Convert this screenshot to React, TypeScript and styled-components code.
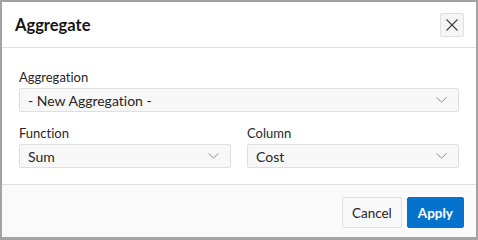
import React from "react";
import styled, { createGlobalStyle } from "styled-components";

const GlobalStyle = createGlobalStyle`
  html, body {
    margin: 0;
    padding: 0;
    background: #ffffff;
  }
  body {
    font-family: Lato, "Noto Sans", sans-serif;
    font-variant-ligatures: none;
    color: #262626;
  }
`;

const Dialog = styled.div`
  box-sizing: border-box;
  width: 478px;
  height: 240px;
  border: 2px solid #a3a3a3;
  border-bottom-width: 3px;
  display: flex;
  flex-direction: column;
  background: #ffffff;
`;

const Header = styled.header`
  height: 45px;
  flex: none;
  display: flex;
  align-items: center;
  justify-content: space-between;
  padding: 0 12px 0 13px;
  border-bottom: 1px solid #dfdfdf;
`;

const Title = styled.h1`
  margin: 0;
  font-size: 16.5px;
  font-weight: 700;
  color: #161616;
`;

const CloseButton = styled.button`
  box-sizing: border-box;
  width: 24px;
  height: 24px;
  padding: 0;
  display: flex;
  align-items: center;
  justify-content: center;
  background: #f5f5f5;
  border: 1px solid #dedede;
  border-radius: 2px;
  color: #404040;
`;

const Body = styled.div`
  flex: 1;
  padding: 21px 17px 0 17px;
  display: flex;
  flex-direction: column;
  gap: 13px;
`;

const Row = styled.div<{ cols: number }>`
  display: grid;
  grid-template-columns: ${(p) => `repeat(${p.cols}, 1fr)`};
  column-gap: 16px;
`;

const Field = styled.div`
  display: flex;
  flex-direction: column;
  gap: 3px;
`;

const Label = styled.label`
  font-size: 13px;
  line-height: 16px;
  color: #262626;
`;

const SelectBox = styled.div`
  box-sizing: border-box;
  height: 24px;
  display: flex;
  align-items: center;
  justify-content: space-between;
  padding: 0 11px 0 8px;
  background: #f7f7f7;
  border: 1px solid #dfdfdf;
  border-radius: 2px;
  font-size: 14px;
  color: #262626;
`;

const Footer = styled.footer`
  flex: none;
  height: 53px;
  box-sizing: border-box;
  border-top: 1px solid #dfdfdf;
  background: #fafafa;
  display: flex;
  justify-content: flex-end;
  align-items: flex-start;
  gap: 5px;
  padding: 12px 12px 0 0;
`;

const Button = styled.button<{ primary?: boolean }>`
  box-sizing: border-box;
  height: 31px;
  padding: 0 ${(p) => (p.primary ? "10px" : "9px")};
  font-family: inherit;
  font-size: 13.5px;
  font-weight: ${(p) => (p.primary ? 700 : 400)};
  border-radius: 2px;
  border: 1px solid ${(p) => (p.primary ? "#0572ce" : "#e0e0e0")};
  background: ${(p) => (p.primary ? "#0572ce" : "#f8f8f8")};
  color: ${(p) => (p.primary ? "#ffffff" : "#262626")};
`;

const Chevron = () => (
  <svg width="11" height="6" viewBox="0 0 11 6" fill="none">
    <path d="M0.5 0.5 L5.5 5 L10.5 0.5" stroke="#8c8c8c" strokeWidth="1" />
  </svg>
);

const Select: React.FC<{ value: string }> = ({ value }) => (
  <SelectBox>
    <span>{value}</span>
    <Chevron />
  </SelectBox>
);

export default function App() {
  return (
    <>
      <GlobalStyle />
      <Dialog>
        <Header>
          <Title>Aggregate</Title>
          <CloseButton aria-label="Close">
            <svg width="12" height="12" viewBox="0 0 12 12">
              <path d="M0.5 0.5 L11.5 11.5 M11.5 0.5 L0.5 11.5" stroke="#404040" strokeWidth="1.1" />
            </svg>
          </CloseButton>
        </Header>
        <Body>
          <Row cols={1}>
            <Field>
              <Label>Aggregation</Label>
              <Select value="- New Aggregation -" />
            </Field>
          </Row>
          <Row cols={2}>
            <Field>
              <Label>Function</Label>
              <Select value="Sum" />
            </Field>
            <Field>
              <Label>Column</Label>
              <Select value="Cost" />
            </Field>
          </Row>
        </Body>
        <Footer>
          <Button>Cancel</Button>
          <Button primary>Apply</Button>
        </Footer>
      </Dialog>
    </>
  );
}
